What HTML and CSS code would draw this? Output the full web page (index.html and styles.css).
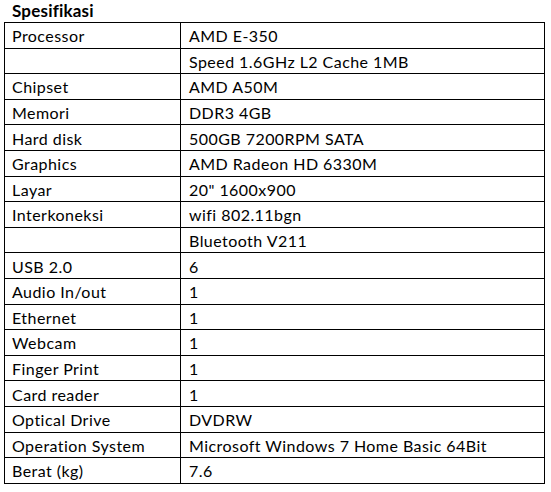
FILE: index.html
```html
<!DOCTYPE html>
<html>
<head>
<meta charset="utf-8">
<link rel="stylesheet" href="styles.css">
</head>
<body>
<div class="title">Spesifikasi</div>
<table class="spec">
<tr><td class="k">Processor</td><td class="v">AMD E-350</td></tr>
<tr><td class="k"></td><td class="v">Speed 1.6GHz L2 Cache 1MB</td></tr>
<tr><td class="k">Chipset</td><td class="v">AMD A50M</td></tr>
<tr><td class="k">Memori</td><td class="v">DDR3 4GB</td></tr>
<tr><td class="k">Hard disk</td><td class="v">500GB 7200RPM SATA</td></tr>
<tr><td class="k">Graphics</td><td class="v">AMD Radeon HD 6330M</td></tr>
<tr><td class="k">Layar</td><td class="v">20" 1600x900</td></tr>
<tr><td class="k">Interkoneksi</td><td class="v">wifi 802.11bgn</td></tr>
<tr><td class="k"></td><td class="v">Bluetooth V211</td></tr>
<tr><td class="k">USB 2.0</td><td class="v">6</td></tr>
<tr><td class="k">Audio In/out</td><td class="v">1</td></tr>
<tr><td class="k">Ethernet</td><td class="v">1</td></tr>
<tr><td class="k">Webcam</td><td class="v">1</td></tr>
<tr><td class="k">Finger Print</td><td class="v">1</td></tr>
<tr><td class="k">Card reader</td><td class="v">1</td></tr>
<tr><td class="k">Optical Drive</td><td class="v">DVDRW</td></tr>
<tr><td class="k">Operation System</td><td class="v">Microsoft Windows 7 Home Basic 64Bit</td></tr>
<tr><td class="k">Berat (kg)</td><td class="v">7.6</td></tr>
</table>
</body>
</html>
```

FILE: styles.css
```css
html, body {
  margin: 0;
  padding: 0;
  background: #ffffff;
}
body {
  padding: 0 6px 0 4px;
  font-family: Lato, "Open Sans", sans-serif;
  color: #000;
}
.title {
  height: 22px;
  line-height: 22px;
  padding-left: 8px;
  font-weight: bold;
  font-size: 17px;
  letter-spacing: 0.2px;
}
.spec {
  border-collapse: collapse;
  width: 541px;
  table-layout: fixed;
  font-size: 16px;
  letter-spacing: 0.45px;
}
.spec tr {
  height: 25.6px;
}
.spec td {
  border: 1px solid #000;
  padding: 2px 0 0 8px;
  vertical-align: middle;
  white-space: nowrap;
  line-height: 20px;
}
.spec td.k {
  width: 168px;
  padding-left: 7px;
}
.spec td.v {
  padding-left: 8px;
}
```
